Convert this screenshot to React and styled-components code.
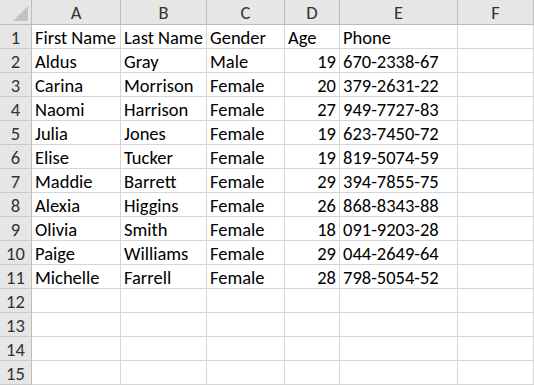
import React from 'react';
import styled, { createGlobalStyle } from 'styled-components';

const GlobalStyle = createGlobalStyle`
  body {
    margin: 0;
    background: #fff;
    overflow: hidden;
  }
`;

const Sheet = styled.div`
  display: grid;
  grid-template-columns: 32px 89px 86px 78px 55px 118px 1fr;
  grid-auto-rows: 24px;
  grid-template-rows: 25px;
  width: 534px;
  height: 385px;
  overflow: hidden;
  font-family: Carlito, Lato, "Open Sans", sans-serif;
  font-size: 18.5px;
  color: #000;
`;

const Corner = styled.div`
  position: relative;
  background: #e6e6e6;
  border-right: 1px solid #bcbcbc;
  border-bottom: 1px solid #bcbcbc;
  overflow: hidden;
`;

const Triangle = styled.div`
  position: absolute;
  right: 3px;
  bottom: 3px;
  width: 0;
  height: 0;
  border-left: 15px solid transparent;
  border-bottom: 15px solid #c2c2c2;
`;

const ColHead = styled.div`
  display: flex;
  align-items: center;
  justify-content: center;
  padding-top: 1px;
  background: #e6e6e6;
  border-right: 1px solid #bcbcbc;
  border-bottom: 1px solid #bcbcbc;
  color: #333;
`;

const RowHead = styled.div`
  display: flex;
  align-items: center;
  justify-content: center;
  padding-top: 1px;
  background: #e6e6e6;
  border-right: 1px solid #bcbcbc;
  border-bottom: 1px solid #c9c9c9;
  color: #333;
`;

const Cell = styled.div`
  display: flex;
  align-items: center;
  justify-content: ${(p) => (p.num ? 'flex-end' : 'flex-start')};
  padding: 1px 3px 0;
  border-right: 1px solid #d6d6d6;
  border-bottom: 1px solid #d6d6d6;
  white-space: nowrap;
  overflow: visible;
`;

const columns = ['A', 'B', 'C', 'D', 'E', 'F'];

const people = [
  ['First Name', 'Last Name', 'Gender', 'Age', 'Phone'],
  ['Aldus', 'Gray', 'Male', 19, '670-2338-67'],
  ['Carina', 'Morrison', 'Female', 20, '379-2631-22'],
  ['Naomi', 'Harrison', 'Female', 27, '949-7727-83'],
  ['Julia', 'Jones', 'Female', 19, '623-7450-72'],
  ['Elise', 'Tucker', 'Female', 19, '819-5074-59'],
  ['Maddie', 'Barrett', 'Female', 29, '394-7855-75'],
  ['Alexia', 'Higgins', 'Female', 26, '868-8343-88'],
  ['Olivia', 'Smith', 'Female', 18, '091-9203-28'],
  ['Paige', 'Williams', 'Female', 29, '044-2649-64'],
  ['Michelle', 'Farrell', 'Female', 28, '798-5054-52'],
];

const rows = Array.from({ length: 15 }, (_, i) => people[i] || ['', '', '', '', '']);

function App() {
  return (
    <>
      <GlobalStyle />
      <Sheet>
        <Corner>
          <Triangle />
        </Corner>
        {columns.map((c) => (
          <ColHead key={c}>{c}</ColHead>
        ))}
        {rows.map((row, r) => (
          <React.Fragment key={r}>
            <RowHead>{r + 1}</RowHead>
            {row.map((value, c) => (
              <Cell key={c} num={typeof value === 'number'}>
                {value}
              </Cell>
            ))}
            <Cell />
          </React.Fragment>
        ))}
      </Sheet>
    </>
  );
}

export default App;
